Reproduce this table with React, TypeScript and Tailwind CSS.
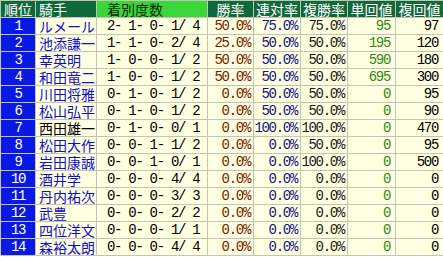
import React from 'react';

interface JockeyRow {
  rank: number;
  name: string;
  linked: boolean;
  record: string;
  win: string;
  place: string;
  show: string;
  winReturn: number;
  showReturn: number;
}

const rows: JockeyRow[] = [
  { rank: 1, name: 'ルメール', linked: true, record: '2- 1- 0- 1/ 4', win: '50.0%', place: '75.0%', show: '75.0%', winReturn: 95, showReturn: 97 },
  { rank: 2, name: '池添謙一', linked: true, record: '1- 1- 0- 2/ 4', win: '25.0%', place: '50.0%', show: '50.0%', winReturn: 195, showReturn: 120 },
  { rank: 3, name: '幸英明', linked: true, record: '1- 0- 0- 1/ 2', win: '50.0%', place: '50.0%', show: '50.0%', winReturn: 590, showReturn: 180 },
  { rank: 4, name: '和田竜二', linked: true, record: '1- 0- 0- 1/ 2', win: '50.0%', place: '50.0%', show: '50.0%', winReturn: 695, showReturn: 300 },
  { rank: 5, name: '川田将雅', linked: true, record: '0- 1- 0- 1/ 2', win: '0.0%', place: '50.0%', show: '50.0%', winReturn: 0, showReturn: 95 },
  { rank: 6, name: '松山弘平', linked: true, record: '0- 1- 0- 1/ 2', win: '0.0%', place: '50.0%', show: '50.0%', winReturn: 0, showReturn: 90 },
  { rank: 7, name: '西田雄一', linked: false, record: '0- 1- 0- 0/ 1', win: '0.0%', place: '100.0%', show: '100.0%', winReturn: 0, showReturn: 470 },
  { rank: 8, name: '松田大作', linked: true, record: '0- 0- 1- 1/ 2', win: '0.0%', place: '0.0%', show: '50.0%', winReturn: 0, showReturn: 95 },
  { rank: 9, name: '岩田康誠', linked: true, record: '0- 0- 1- 0/ 1', win: '0.0%', place: '0.0%', show: '100.0%', winReturn: 0, showReturn: 500 },
  { rank: 10, name: '酒井学', linked: true, record: '0- 0- 0- 4/ 4', win: '0.0%', place: '0.0%', show: '0.0%', winReturn: 0, showReturn: 0 },
  { rank: 11, name: '丹内祐次', linked: true, record: '0- 0- 0- 3/ 3', win: '0.0%', place: '0.0%', show: '0.0%', winReturn: 0, showReturn: 0 },
  { rank: 12, name: '武豊', linked: true, record: '0- 0- 0- 2/ 2', win: '0.0%', place: '0.0%', show: '0.0%', winReturn: 0, showReturn: 0 },
  { rank: 13, name: '四位洋文', linked: true, record: '0- 0- 0- 1/ 1', win: '0.0%', place: '0.0%', show: '0.0%', winReturn: 0, showReturn: 0 },
  { rank: 14, name: '森裕太朗', linked: true, record: '0- 0- 0- 4/ 4', win: '0.0%', place: '0.0%', show: '0.0%', winReturn: 0, showReturn: 0 },
];

const kanji = "font-['Noto_Sans_CJK_JP',sans-serif] text-[14px]";
const mono = "font-['Liberation_Mono','Noto_Sans_CJK_JP',monospace] text-[14px] tracking-[-1.3px]";

const th = `h-[17px] p-0 border border-[#c4c4b4] bg-[#10693a] text-white font-normal leading-[16px] ${kanji}`;
const td = 'h-[17px] p-0 border border-[#c4c4b4] bg-[#ffffe2] leading-[16px] whitespace-pre';

const App: React.FC = () => {
  return (
    <div className="w-[443px] h-[257px] overflow-hidden bg-white">
      <table className="table-fixed border-collapse w-[443px]">
        <colgroup>
          <col className="w-[35px]" />
          <col className="w-[61px]" />
          <col className="w-[111px]" />
          <col className="w-[46px]" />
          <col className="w-[47px]" />
          <col className="w-[47px]" />
          <col className="w-[48px]" />
          <col className="w-[48px]" />
        </colgroup>
        <thead>
          <tr>
            <th className={`${th} text-center`}>順位</th>
            <th className={`${th} text-left pl-[3px]`}>騎手</th>
            <th className={`${th} text-left pl-[10px] !bg-[#3ad63a] !text-[#0d2a0d]`}>着別度数</th>
            <th className={`${th} text-center`}>勝率</th>
            <th className={`${th} text-center`}>連対率</th>
            <th className={`${th} text-center`}>複勝率</th>
            <th className={`${th} text-center`}>単回値</th>
            <th className={`${th} text-center`}>複回値</th>
          </tr>
        </thead>
        <tbody>
          {rows.map(row => (
            <tr key={row.rank}>
              <td className={`${td} ${mono} !bg-[#0a18e6] text-white text-center`}>{row.rank}</td>
              <td className={`${td} ${kanji} pl-[3px] ${row.linked ? 'text-[#1010c8]' : 'text-black'}`}>{row.name}</td>
              <td className={`${td} ${mono} pl-[10px] text-black`}>{row.record}</td>
              <td className={`${td} ${mono} text-right pr-[3px] text-[#7a1a00]`}>{row.win}</td>
              <td className={`${td} ${mono} text-right pr-[3px] text-[#141482]`}>{row.place}</td>
              <td className={`${td} ${mono} text-right pr-[3px] text-[#1a1a1a]`}>{row.show}</td>
              <td className={`${td} ${mono} text-right pr-[5px] text-[#2f8a10]`}>{row.winReturn}</td>
              <td className={`${td} ${mono} text-right pr-[5px] text-black`}>{row.showReturn}</td>
            </tr>
          ))}
        </tbody>
      </table>
    </div>
  );
};

export default App;
